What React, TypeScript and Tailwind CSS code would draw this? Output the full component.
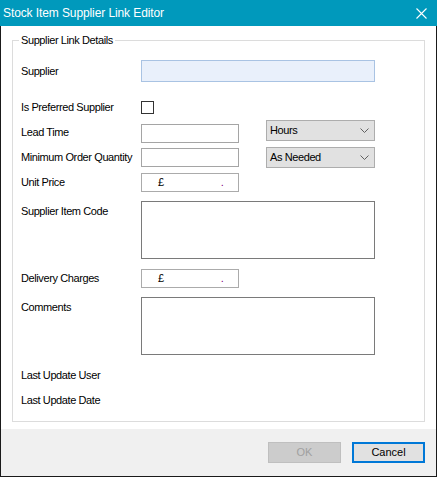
import React from "react";

const font = { fontFamily: '"Liberation Sans", Arial, sans-serif' };

function Chevron() {
  return (
    <svg width="9" height="5" viewBox="0 0 9 5" className="shrink-0">
      <path d="M0.5 0.5 L4.5 4.5 L8.5 0.5" fill="none" stroke="#606060" strokeWidth="1" />
    </svg>
  );
}

function Combo({ value }: { value: string }) {
  return (
    <div className="ml-[27px] flex h-[21px] w-[109px] items-center justify-between border border-[#adadad] bg-[#e1e1e1] pl-[3px] pr-[5px]">
      <span>{value}</span>
      <Chevron />
    </div>
  );
}

function Money() {
  return (
    <div className="flex h-[19px] w-[98px] items-center border border-[#ababab] bg-white pl-[16px]">
      <span>£</span>
      <span className="ml-[57px] text-[#800080]">.</span>
    </div>
  );
}

function Label({ children, className = "" }: { children: React.ReactNode; className?: string }) {
  return <div className={`w-[120px] shrink-0 leading-[13px] ${className}`}>{children}</div>;
}

export default function App() {
  return (
    <div className="flex h-[477px] w-[437px] flex-col text-[11px] tracking-[-0.4px] text-black" style={font}>
      {/* title bar */}
      <div className="flex h-[26px] shrink-0 items-center justify-between bg-[#0099bc] pl-[3px] pr-[10px] text-white">
        <span className="text-[12px] tracking-[-0.1px]">Stock Item Supplier Link Editor</span>
        <svg width="11" height="11" viewBox="0 0 11 11">
          <path d="M0.5 0.5 L10.5 10.5 M10.5 0.5 L0.5 10.5" stroke="white" strokeWidth="1.1" />
        </svg>
      </div>

      <div className="flex flex-1 flex-col border-x border-b border-[#1a1a1a]">
        <div className="h-[403px] bg-white pl-[11px] pt-[14px]">
          <div className="relative flex h-[382px] w-[413px] flex-col border border-[#dcdcdc] pl-[8px]">
            <span className="absolute left-[6px] top-[-7px] bg-white px-[2px] leading-[13px]">Supplier Link Details</span>

            <div className="mt-[19px] flex h-[22px] items-center">
              <Label>Supplier</Label>
              <div className="h-[22px] w-[234px] border border-[#a9c3e3] bg-[#e9f0fb]" />
            </div>

            <div className="mt-[19px] flex h-[13px] items-center">
              <Label>Is Preferred Supplier</Label>
              <div className="h-[13px] w-[13px] border border-[#333333] bg-white" />
            </div>

            <div className="mt-[6px] flex items-start">
              <Label className="mt-[6px]">Lead Time</Label>
              <div className="mt-[4px] h-[19px] w-[98px] border border-[#a5a5a5] bg-white" />
              <Combo value="Hours" />
            </div>

            <div className="mt-[4px] flex items-start">
              <Label className="mt-[4px]">Minimum Order Quantity</Label>
              <div className="mt-[1px] h-[19px] w-[98px] border border-[#a5a5a5] bg-white" />
              <Combo value="As Needed" />
            </div>

            <div className="mt-[5px] flex h-[19px] items-center">
              <Label>Unit Price</Label>
              <Money />
            </div>

            <div className="mt-[9px] flex items-start">
              <Label className="mt-[4px]">Supplier Item Code</Label>
              <div className="h-[58px] w-[234px] border border-[#7a7a7a] bg-white" />
            </div>

            <div className="mt-[10px] flex h-[19px] items-center">
              <Label>Delivery Charges</Label>
              <Money />
            </div>

            <div className="mt-[9px] flex items-start">
              <Label className="mt-[4px]">Comments</Label>
              <div className="h-[58px] w-[234px] border border-[#7a7a7a] bg-white" />
            </div>

            <div className="mt-[10px] flex h-[20px] items-center">
              <Label>Last Update User</Label>
            </div>
            <div className="mt-[5px] flex h-[20px] items-center">
              <Label>Last Update Date</Label>
            </div>
          </div>
        </div>

        <div className="flex flex-1 items-start justify-end gap-[11px] bg-[#f0f0f0] pr-[11px] pt-[13px]">
          <div className="flex h-[21px] w-[73px] items-center justify-center border border-[#bfbfbf] bg-[#cccccc] tracking-normal text-[#a0a0a0]">
            OK
          </div>
          <div className="flex h-[21px] w-[73px] items-center justify-center border-2 border-[#0078d7] bg-[#e1e1e1] tracking-normal">
            Cancel
          </div>
        </div>
      </div>
    </div>
  );
}
